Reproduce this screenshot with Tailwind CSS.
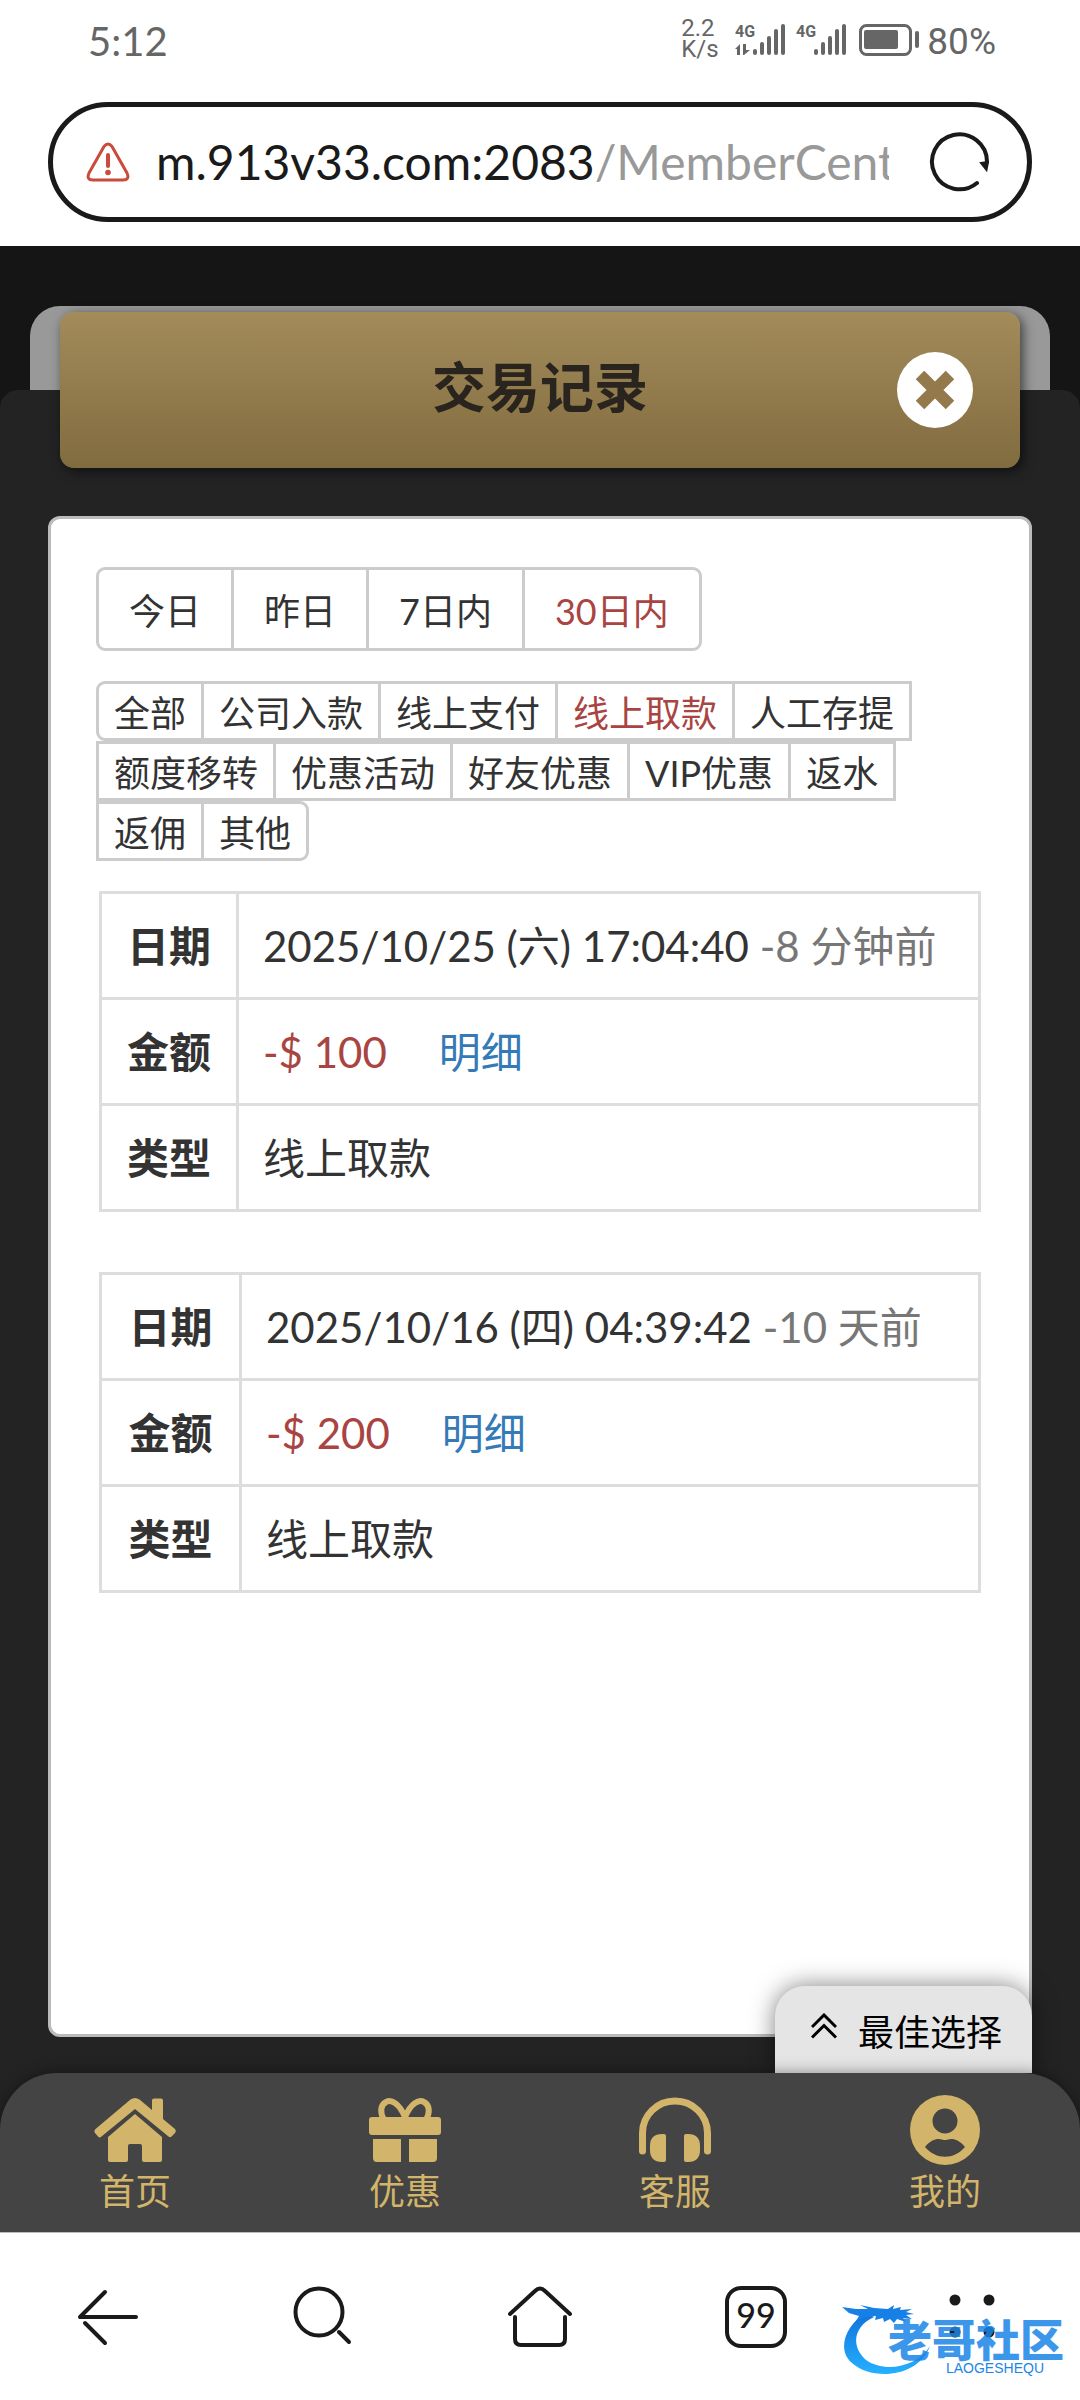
<!DOCTYPE html>
<html lang="zh-CN">
<head>
<meta charset="utf-8">
<meta name="viewport" content="width=device-width, initial-scale=1">
<title>交易记录</title>
<script src="https://cdn.jsdelivr.net/npm/@tailwindcss/browser@4"></script>
</head>
<body class="flex min-h-screen flex-col bg-white font-['Lato','Noto_Sans_CJK_SC',sans-serif] text-[#333]">

<!-- Status bar and address bar -->
<header class="flex flex-col px-12 pb-6">
  <div class="flex h-[102px] items-start justify-between pt-4 pr-9 pl-10 text-[#666]">
    <span class="text-[40px] leading-[50px]">5:12</span>
    <div class="flex items-start">
      <div class="w-[54px] pt-[2px] font-['Roboto'] text-[24px] leading-[21px]"><div>2.2</div><div>K/s</div></div>
      <svg class="mt-2 h-8 w-[52px] overflow-visible" viewBox="0 0 52 32" fill="currentColor" role="img" aria-label="4G">
        <text x="0" y="13" font-family="Roboto" font-weight="700" font-size="16">4G</text>
        <path d="M0 25l5-5v11h-3v-6zM8 20h3v6h4l-6 5h-1z"/>
        <rect x="18" y="25" width="4" height="6" rx="2"/><rect x="25" y="18" width="4" height="13" rx="2"/><rect x="32" y="12" width="4" height="19" rx="2"/><rect x="39" y="5" width="4" height="26" rx="2"/><rect x="46" y="0" width="4" height="31" rx="2"/>
      </svg>
      <svg class="mt-2 ml-2 h-8 w-[60px] overflow-visible" viewBox="0 0 60 32" fill="currentColor" role="img" aria-label="4G">
        <text x="1" y="13" font-family="Roboto" font-weight="700" font-size="16">4G</text>
        <rect x="19" y="25" width="4" height="6" rx="2"/><rect x="26" y="18" width="4" height="13" rx="2"/><rect x="33" y="12" width="4" height="19" rx="2"/><rect x="40" y="5" width="4" height="26" rx="2"/><rect x="47" y="0" width="4" height="31" rx="2"/>
      </svg>
      <svg class="mt-2 ml-1 h-8 w-[68px]" viewBox="0 0 68 32" fill="none" role="img" aria-label="电量">
        <rect x="1.500" y="1.500" width="50" height="29" rx="6" stroke="currentColor" stroke-width="3"/>
        <rect x="5" y="6" width="34" height="19" rx="2" fill="currentColor"/><rect x="56" y="7" width="4" height="17" rx="2" fill="currentColor"/>
      </svg>
      <span class="font-['Roboto'] text-[37px] leading-[52px]">80%</span>
    </div>
  </div>
  <div class="flex h-[120px] items-center rounded-full border-[5px] border-[#1a1a1a] pr-[38px] pl-[33px]">
    <svg class="h-10 w-11 shrink-0" viewBox="0 0 44 40" fill="none" stroke="#c94b3c" stroke-width="4" role="img" aria-label="不安全">
      <path d="M18 4.500Q22 -.5 26 4.500L41 31Q44 38 37 38H7Q0 38 3 31Z" stroke-linejoin="round" stroke-width="3"/>
      <path d="M22 13v11" stroke-linecap="round"/><circle cx="22" cy="30.500" r="2.800" fill="#c94b3c" stroke="none"/>
    </svg>
    <button class="ml-[26px] min-w-0 flex-1 overflow-hidden text-left text-[48px] leading-[64px] whitespace-nowrap text-[#1a1a1a]">m.913v33.com:2083<span class="text-[#999]">/MemberCent</span></button>
    <button class="ml-10 shrink-0" aria-label="刷新">
      <svg class="h-[60px] w-[60px]" viewBox="0 0 60 60" fill="none" stroke="#1a1a1a" stroke-width="4" stroke-linecap="round">
        <path d="M48 51A27.500 27.500 0 1 1 58 30"/><path d="M52 31l7-1-1.500 8z" fill="#1a1a1a" stroke-width="2"/>
      </svg>
    </button>
  </div>
</header>

<!-- Page content -->
<main class="relative flex flex-1 flex-col bg-[#151515] pt-[66px]">
  <div class="absolute inset-x-[30px] top-[60px] h-[100px] rounded-t-[30px] bg-[#999]"></div>
  <div class="absolute inset-x-0 top-36 bottom-0 rounded-t-[18px] bg-[#232323]"></div>

  <div class="relative mx-[60px] flex h-[156px] items-center justify-center rounded-[14px] bg-linear-to-b from-[#a38b5a] to-[#816c40] shadow-[3px_3px_12px_rgba(0,0,0,0.6)]">
    <h1 class="pb-1 text-[54px] leading-[60px] font-bold text-[#2a241e]">交易记录</h1>
    <button class="absolute right-[47px]" aria-label="关闭">
      <svg class="h-[76px] w-[76px]" viewBox="0 0 76 76"><circle cx="38" cy="38" r="38" fill="#fff"/><path d="M23 23l30 30M53 23l-30 30" stroke="#93794b" stroke-width="12"/></svg>
    </button>
  </div>

  <section class="relative mx-12 mt-12 mb-9 flex-1 rounded-[12px] border-[3px] border-[#bbb] bg-white px-[45px] pt-12">
    <div class="flex pl-[3px] text-[36px] leading-[74px]">
      <button class="-ml-[3px] rounded-l-[9px] border-[3px] border-[#ccc] px-[30px] pt-1">今日</button>
      <button class="-ml-[3px] border-[3px] border-[#ccc] px-[30px] pt-1">昨日</button>
      <button class="-ml-[3px] border-[3px] border-[#ccc] px-[30px] pt-1">7日内</button>
      <button class="-ml-[3px] rounded-r-[9px] border-[3px] border-[#ccc] px-[30px] pt-1 text-[#a94442]">30日内</button>
    </div>

    <div class="mt-[30px] flex flex-wrap pl-[3px] text-[36px] leading-[50px]">
      <button class="-ml-[3px] rounded-l-[9px] border-[3px] border-[#ccc] px-[15px] pt-1">全部</button>
      <button class="-ml-[3px] border-[3px] border-[#ccc] px-[15px] pt-1">公司入款</button>
      <button class="-ml-[3px] border-[3px] border-[#ccc] px-[15px] pt-1">线上支付</button>
      <button class="-ml-[3px] border-[3px] border-[#ccc] px-[15px] pt-1 text-[#a94442]">线上取款</button>
      <button class="-ml-[3px] border-[3px] border-[#ccc] px-[15px] pt-1">人工存提</button>
      <button class="-ml-[3px] border-[3px] border-[#ccc] px-[15px] pt-1">额度移转</button>
      <button class="-ml-[3px] border-[3px] border-[#ccc] px-[15px] pt-1">优惠活动</button>
      <button class="-ml-[3px] border-[3px] border-[#ccc] px-[15px] pt-1">好友优惠</button>
      <button class="-ml-[3px] border-[3px] border-[#ccc] px-[15px] pt-1">VIP优惠</button>
      <button class="-ml-[3px] border-[3px] border-[#ccc] px-[15px] pt-1">返水</button>
      <button class="-ml-[3px] border-[3px] border-[#ccc] px-[15px] pt-1">返佣</button>
      <button class="-ml-[3px] rounded-r-[9px] border-[3px] border-[#ccc] px-[15px] pt-1">其他</button>
    </div>

    <div class="mt-[30px] flex flex-col gap-[60px] px-[3px] text-[42px] leading-[60px]">
      <table class="w-full border-collapse">
        <tr class="h-[106px]"><th class="w-[137px] border-[3px] border-[#ddd] font-bold">日期</th><td class="border-[3px] border-[#ddd] px-6">2025/10/25 (六) 17:04:40 <span class="text-[#777]">-8 分钟前</span></td></tr>
        <tr class="h-[106px]"><th class="border-[3px] border-[#ddd] font-bold">金额</th><td class="border-[3px] border-[#ddd] px-6"><span class="text-[#a94442]">-$ 100</span><a href="#" class="ml-[52px] text-[#337ab7]">明细</a></td></tr>
        <tr class="h-[106px]"><th class="border-[3px] border-[#ddd] font-bold">类型</th><td class="border-[3px] border-[#ddd] px-6">线上取款</td></tr>
      </table>
      <table class="w-full border-collapse">
        <tr class="h-[106px]"><th class="w-[140px] border-[3px] border-[#ddd] font-bold">日期</th><td class="border-[3px] border-[#ddd] px-6">2025/10/16 (四) 04:39:42 <span class="text-[#777]">-10 天前</span></td></tr>
        <tr class="h-[106px]"><th class="border-[3px] border-[#ddd] font-bold">金额</th><td class="border-[3px] border-[#ddd] px-6"><span class="text-[#a94442]">-$ 200</span><a href="#" class="ml-[52px] text-[#337ab7]">明细</a></td></tr>
        <tr class="h-[106px]"><th class="border-[3px] border-[#ddd] font-bold">类型</th><td class="border-[3px] border-[#ddd] px-6">线上取款</td></tr>
      </table>
    </div>
  </section>

  <!-- Site navigation -->
  <div class="relative">
    <button class="absolute right-12 bottom-full flex h-[87px] items-center rounded-t-[30px] bg-[#e5e5e5] pt-1 pr-[30px] pl-9 text-[36px] leading-[60px] text-black shadow-[0_0_24px_rgba(0,0,0,0.5)]">
      <svg class="mr-[21px] mb-3 h-[26px] w-[26px]" viewBox="0 0 26 26" fill="none" stroke="#000" stroke-width="3"><path d="M1 14L13 2l12 12M1 24.500l12-12 12 12"/></svg>最佳选择
    </button>
    <nav class="relative grid h-[159px] grid-cols-4 rounded-t-[57px] bg-[#444] pt-[22px] text-[36px] leading-[44px] text-[#d2b56a] shadow-[0_0_15px_rgba(0,0,0,0.4)]">
      <a href="#" class="flex flex-col items-center gap-1">
        <svg class="h-[70px] w-[82px]" viewBox="0 0 82 70" fill="currentColor"><path d="M1.500 34Q-.5 36 1 38l3.500 4Q6 43 7.500 41.500L41 14l33.500 27.500Q76 43 77.500 41.500L81 38q1.500-2 0-4L69 24V5.500Q69 3.500 67 3.500h-7q-2 0-2 2V15L45.500 4.500Q41 1.500 36.500 4.500Z"/><path d="M14 42L41 19l27 23v23q0 2-2 2H50q-2 0-2-2V51q0-2-2-2H36q-2 0-2 2v14q0 2-2 2H16q-2 0-2-2Z"/></svg>
        <span>首页</span>
      </a>
      <a href="#" class="flex flex-col items-center gap-1">
        <svg class="h-[70px] w-[72px]" viewBox="0 0 72 70" fill="currentColor"><rect y="22" width="72" height="18" rx="3"/><path d="M4 44h28v23H8q-4 0-4-4zM40 44h28v19q0 4-4 4H40z"/><path d="M36 22C30 8 22 4 17 7c-6 3-6 11-2 18M36 22C42 8 50 4 55 7c6 3 6 11 2 18" fill="none" stroke="currentColor" stroke-width="6"/></svg>
        <span>优惠</span>
      </a>
      <a href="#" class="flex flex-col items-center gap-1">
        <svg class="h-[70px] w-[72px]" viewBox="0 0 72 70" fill="currentColor"><path d="M3.500 56V38a32.500 32 0 0 1 65 0v18" fill="none" stroke="currentColor" stroke-width="7" stroke-linecap="round"/><path d="M23 39h2q2 0 2 2v24q0 2-2 2h-2q-12 0-12-12v-4q0-12 12-12zM49 39h-2q-2 0-2 2v24q0 2 2 2h2q12 0 12-12v-4q0-12-12-12z"/></svg>
        <span>客服</span>
      </a>
      <a href="#" class="flex flex-col items-center gap-1">
        <svg class="h-[70px] w-[70px]" viewBox="0 0 70 70"><circle cx="35" cy="35" r="35" fill="currentColor"/><circle cx="35" cy="26" r="12.500" fill="#444"/><path d="M15 52C21 44 28 43 32 44.500q3 1 6 0C42 43 49 44 55 52C44 65 26 65 15 52Z" fill="#444"/></svg>
        <span>我的</span>
      </a>
    </nav>
  </div>
</main>

<!-- Browser toolbar -->
<footer class="relative grid h-[168px] grid-cols-5 items-center justify-items-center border-t border-[#bbb] bg-white text-[#1a1a1a]">
  <button aria-label="后退"><svg class="h-16 w-16" viewBox="0 0 64 64" fill="none" stroke="currentColor" stroke-width="4" stroke-linecap="round" stroke-linejoin="round"><path d="M29 7L4 32h56M9 38l20 20"/></svg></button>
  <button aria-label="搜索"><svg class="h-16 w-16" viewBox="0 0 64 64" fill="none" stroke="currentColor" stroke-width="4" stroke-linecap="round"><circle cx="27" cy="27" r="23.500"/><path d="M47 47l10 10"/></svg></button>
  <button aria-label="主页"><svg class="h-16 w-16" viewBox="0 0 64 64" fill="none" stroke="currentColor" stroke-width="4" stroke-linecap="round" stroke-linejoin="round"><path d="M2 29L27 6Q32 1 37 6L62 29M7 32v22q0 6 6 6h38q6 0 6-6V32"/></svg></button>
  <button class="flex h-[62px] w-[62px] items-center justify-center rounded-[16px] border-4 border-current pb-1 text-[34px] leading-[48px] font-medium" aria-label="标签页">99</button>
  <button aria-label="菜单"><svg class="h-16 w-16" viewBox="0 0 64 64" fill="currentColor"><circle cx="15" cy="15" r="5.500"/><circle cx="49" cy="15" r="5.500"/><circle cx="15" cy="47" r="5.500"/><circle cx="49" cy="47" r="5.500"/></svg></button>

  <!-- Community logo laid over the toolbar -->
  <div class="pointer-events-none absolute right-4 bottom-6 h-[72px] w-[222px] text-[#1b86e8]">
    <svg class="absolute inset-0 h-[72px] w-[110px]" viewBox="0 0 110 72">
      <defs><linearGradient id="dragon" x1="0" y1="0" x2="0" y2="1"><stop offset="0" stop-color="#1173dc"/><stop offset="1" stop-color="#25b0ff"/></linearGradient></defs>
      <path d="M24 9C4 20-6 46 10 59C30 77 76 74 88 42C76 62 44 70 24 56C8 42 12 22 32 13Z" fill="url(#dragon)"/>
      <path d="M0 3l14 2 12 0-8-4 14 3 14 1 6-4-1 4 8-2-1 3 12-1-6 3 8 2-8 1 6 4-9-1 3 4-9-3-3 4-4-4-6 3-1-4-8 2 1-4-12 1-8 4 3-5-10-3z" fill="#1780e6"/>
    </svg>
    <div class="absolute right-0 bottom-4 text-[44px] leading-[40px] font-black opacity-85">老哥社区</div>
    <div class="absolute right-5 bottom-0 font-['Liberation_Sans'] text-[14px] leading-[16px]">LAOGESHEQU</div>
  </div>
</footer>
</body>
</html>
